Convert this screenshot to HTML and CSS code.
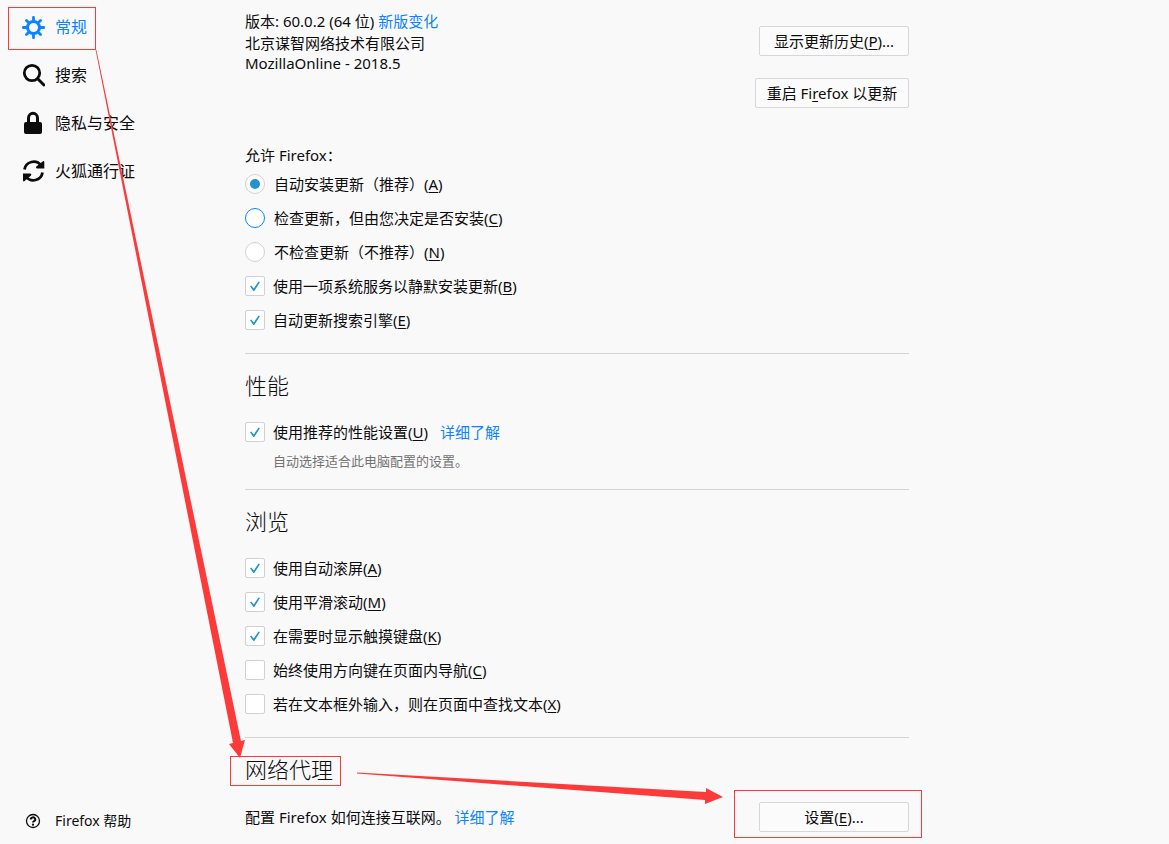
FILE: index.html
```html
<!DOCTYPE html>
<html lang="zh-CN">
<head>
  <meta charset="UTF-8" />
  <meta name="viewport" content="width=device-width, initial-scale=1.0" />
  <title>选项</title>
  <link rel="stylesheet" href="styles.css">
</head>
<body>
  <aside class="sidebar">
    <nav class="categories">
      <a class="category selected" href="#general">
        <svg class="icon" viewBox="0 0 24 24">
          <circle cx="12.500" cy="12.500" r="6" fill="none" stroke="currentColor" stroke-width="3" />
          <path d="M12.500 5V2.300M12.500 20v2.700M5 12.500H2.300M20 12.500h2.700M7 7L5.500 5.500M18 7l1.500-1.500M7 18l-1.500 1.500M18 18l1.500 1.500" fill="none" stroke="currentColor" stroke-width="2.800" stroke-linecap="round" />
        </svg>
        <span>常规</span>
      </a>
      <a class="category" href="#search">
        <svg class="icon" viewBox="0 0 24 24">
          <circle cx="11" cy="10" r="7.700" fill="none" stroke="currentColor" stroke-width="2.800" />
          <path d="M16.700 15.700L23 22" fill="none" stroke="currentColor" stroke-width="3" stroke-linecap="round" />
        </svg>
        <span>搜索</span>
      </a>
      <a class="category" href="#privacy">
        <svg class="icon" viewBox="0 0 24 24">
          <path d="M7.500 12V7a4.500 4.700 0 0 1 9 0v5" fill="none" stroke="currentColor" stroke-width="3" />
          <rect x="3" y="11" width="18" height="12" rx="2" fill="currentColor" />
        </svg>
        <span>隐私与安全</span>
      </a>
      <a class="category" href="#sync">
        <svg class="icon" viewBox="0 0 24 24">
          <path d="M3.500 10.500a9.200 9.200 0 0 1 16.500-4M21.500 13.500a9.200 9.200 0 0 1-16.500 4" fill="none" stroke="currentColor" stroke-width="2.800" />
          <path d="M22.300 2q1 0 1 1v6.500h-7.500q-1.500-1-.5-2zM3 22.500q-1 0-1-1V14.500h7.500q1.500 1 .5 2z" fill="currentColor" />
        </svg>
        <span>火狐通行证</span>
      </a>
    </nav>
    <a class="help" href="#help">
      <svg class="help-icon" viewBox="0 0 16 16">
        <circle cx="8" cy="8" r="6.500" fill="none" stroke="currentColor" stroke-width="1.300" />
        <path d="M5.800 6.500a2.200 2 0 1 1 3.300 1.600Q8 8.700 8 9.600" fill="none" stroke="currentColor" stroke-width="2" />
        <circle cx="8" cy="11.700" r="1.100" fill="currentColor" />
      </svg>
      <span>Firefox 帮助</span>
    </a>
  </aside>

  <main class="content">
    <section class="update">
      <div class="version">
        <div class="version-info">
          <p class="version-line">版本: 60.0.2 (64 位) <a href="#notes">新版变化</a></p>
          <p>北京谋智网络技术有限公司</p>
          <p>MozillaOnline - 2018.5</p>
        </div>
        <div class="version-buttons">
          <button type="button">显示更新历史(<u>P</u>)...</button>
          <button type="button" class="restart">重启 Fi<u>r</u>efox 以更新</button>
        </div>
      </div>
      <p class="allow">允许 Firefox：</p>
      <label class="row"><input type="radio" name="update" checked><span>自动安装更新（推荐）(<u>A</u>)</span></label>
      <label class="row"><input type="radio" name="update" class="focused"><span>检查更新，但由您决定是否安装(<u>C</u>)</span></label>
      <label class="row"><input type="radio" name="update"><span>不检查更新（不推荐）(<u>N</u>)</span></label>
      <label class="row"><input type="checkbox" checked><span>使用一项系统服务以静默安装更新(<u>B</u>)</span></label>
      <label class="row"><input type="checkbox" checked><span>自动更新搜索引擎(<u>E</u>)</span></label>
    </section>

    <section>
      <h2>性能</h2>
      <div class="row">
        <label class="row"><input type="checkbox" checked><span>使用推荐的性能设置(<u>U</u>)</span></label>
        <a class="learn" href="#performance">详细了解</a>
      </div>
      <p class="tip">自动选择适合此电脑配置的设置。</p>
    </section>

    <section>
      <h2>浏览</h2>
      <label class="row"><input type="checkbox" checked><span>使用自动滚屏(<u>A</u>)</span></label>
      <label class="row"><input type="checkbox" checked><span>使用平滑滚动(<u>M</u>)</span></label>
      <label class="row"><input type="checkbox" checked><span>在需要时显示触摸键盘(<u>K</u>)</span></label>
      <label class="row"><input type="checkbox"><span>始终使用方向键在页面内导航(<u>C</u>)</span></label>
      <label class="row"><input type="checkbox"><span>若在文本框外输入，则在页面中查找文本(<u>X</u>)</span></label>
    </section>

    <section class="proxy">
      <h2>网络代理</h2>
      <div class="row">
        <p>配置 Firefox 如何连接互联网。 <a href="#proxy">详细了解</a></p>
        <button type="button">设置(<u>E</u>)...</button>
      </div>
    </section>
  </main>

  <!-- red boxes and arrows drawn over the page -->
  <svg class="marks" width="930" height="844" viewBox="0 0 930 844">
    <g fill="none" stroke="#fc3a3a">
      <rect x="8.500" y="7.500" width="87" height="42" />
      <rect x="230.500" y="756.500" width="110" height="29" />
      <rect x="734.500" y="790.500" width="187" height="47" />
    </g>
    <g fill="#fc3a3a">
      <path d="M95.600 50H96.400L241 741L245 740L240 758L229 744L233 743Z" />
      <path d="M357 772.500L706 792L706 788L723 797L705 804L705 800L357 773.500Z" />
    </g>
  </svg>
</body>
</html>
```
FILE: styles.css
```css
* {
  box-sizing: border-box;
}

body {
  display: flex;
  min-height: 100vh;
  margin: 0;
  background: #f9f9fa;
  color: #0c0c0d;
  font-family: "Noto Sans", "Noto Sans CJK SC", sans-serif;
  font-size: 15px;
  line-height: 20px;
}

p,
h2 {
  margin: 0;
}

a {
  color: #0a84ff;
  text-decoration: none;
}

u {
  text-underline-offset: 2px;
}

.sidebar {
  display: flex;
  flex-direction: column;
  justify-content: space-between;
  flex: 0 0 245px;
  padding: 3px 0 13px 21px;
}

.category,
.help {
  display: flex;
  align-items: center;
  color: #0c0c0d;
}

.category {
  height: 48px;
  gap: 10px;
  font-size: 16px;
}

.category.selected {
  color: #0a84ff;
}

.icon {
  width: 24px;
  height: 24px;
}

.help {
  gap: 14px;
  padding-left: 4px;
  font-size: 14px;
}

.help-icon {
  width: 16px;
  height: 16px;
}

.content {
  flex: 1;
  max-width: 664px;
}

section {
  padding: 15px 0 16px;
  border-top: 1px solid #d3d3d4;
}

.update {
  padding-top: 9px;
  border-top: none;
}

.proxy {
  padding-bottom: 0;
}

h2 {
  margin-bottom: 14px;
  font-size: 22px;
  font-weight: 300;
  line-height: 32px;
}

.version {
  display: flex;
  justify-content: space-between;
  margin-bottom: 35px;
}

.version-line {
  line-height: 24px;
}

.version-buttons {
  display: flex;
  flex-direction: column;
  align-items: flex-end;
  gap: 22px;
  padding-top: 17px;
}

button {
  min-width: 150px;
  height: 30px;
  padding: 0 8px;
  border: 1px solid #d7d7db;
  border-radius: 2px;
  background: #fbfbfb;
  color: #0c0c0d;
  font: inherit;
}

.restart {
  min-width: 154px;
}

.allow {
  line-height: 24px;
}

.row {
  display: flex;
  align-items: center;
  height: 34px;
}

.proxy .row {
  height: 36px;
}

.row button {
  margin-left: auto;
}

.learn {
  margin-left: 12px;
}

.tip {
  padding-left: 28px;
  color: #737373;
  font-size: 13px;
  line-height: 24px;
}

input {
  appearance: none;
  display: grid;
  place-items: center;
  width: 20px;
  height: 20px;
  margin: 0 8px 0 0;
  border: 1px solid #d1d1d5;
  border-radius: 2px;
  background: #fff;
}

input[type="radio"] {
  margin-right: 9px;
  border-radius: 50%;
}

input.focused {
  border-color: #0a84ff;
}

input[type="radio"]:checked::before {
  content: "";
  width: 10px;
  height: 10px;
  border-radius: 50%;
  background: #2292d0;
}

input[type="checkbox"]:checked::before {
  content: "";
  width: 10px;
  height: 10px;
  background: #2292d0;
  clip-path: polygon(0 52%, 12% 46%, 38% 74%, 86% 4%, 100% 10%, 43% 100%, 34% 100%);
}

.marks {
  position: absolute;
  top: 0;
  left: 0;
  pointer-events: none;
}
```
